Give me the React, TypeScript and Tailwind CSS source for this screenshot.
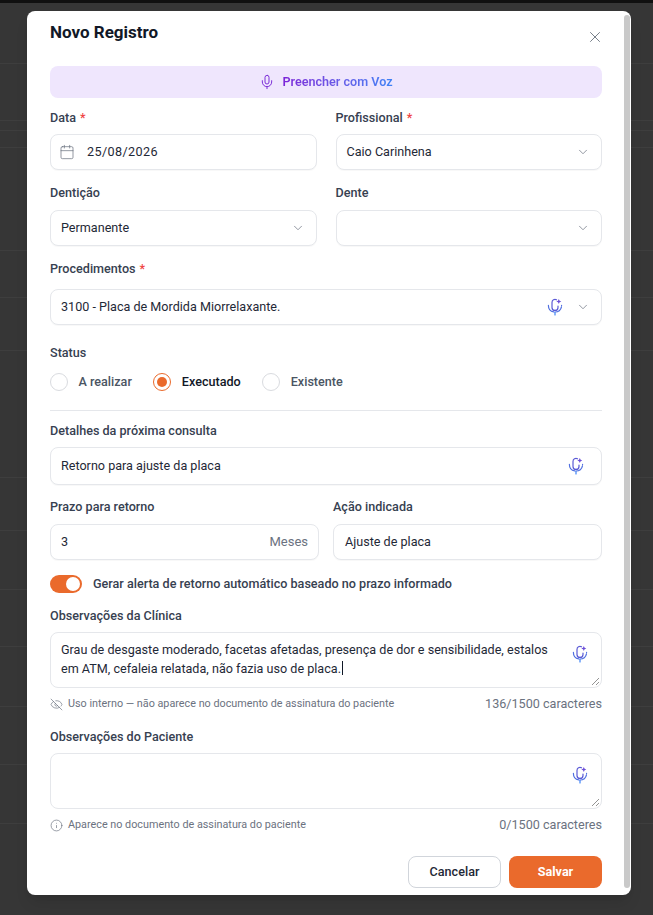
import { Calendar, ChevronDown, EyeOff, Info, Mic, X } from 'lucide-react';
import type { ReactNode } from 'react';

const rowLines = [63, 120, 130, 147, 250, 297, 350, 477, 530, 589, 646, 706, 764, 823];

function Label({ children, required }: { children: ReactNode; required?: boolean }) {
  return (
    <label className="block h-[19px] text-[12.6px] leading-[19px] font-medium text-[#374151]">
      {children}
      {required && <span className="ml-1 text-[#ef4444]">*</span>}
    </label>
  );
}

function AiMic() {
  return (
    <svg width="16" height="18" viewBox="0 0 16 18" fill="none" strokeWidth="1.2" strokeLinecap="round">
      <path d="M9.5 1.8A3 3 0 0 0 5 4.4v5a3 3 0 0 0 6 0V8" stroke="#5b5bd6" />
      <path d="M1.4 7.4a6.6 6.6 0 0 0 13.2 0" stroke="#4f6fe0" strokeDasharray="9 1.2" />
      <path d="M8 14.6V17" stroke="#3b82f6" />
      <path d="M11.8 1l.8 1.7 1.7.8-1.7.8-.8 1.7-.8-1.7-1.7-.8 1.7-.8z" fill="#6d4fd8" />
    </svg>
  );
}

function Field({ children, className }: { children: ReactNode; className: string }) {
  return (
    <div className={`flex h-9 items-center rounded-lg border border-[#e5e7eb] bg-white text-[12.6px] text-[#1f2937] shadow-[0_1px_1px_rgba(0,0,0,0.03)] ${className}`}>
      {children}
    </div>
  );
}

function Select({ value }: { value?: string }) {
  return (
    <Field className="justify-between pr-[11px] pl-[10px]">
      <span>{value}</span>
      <ChevronDown size={14} strokeWidth={1.25} className="text-[#6b7280]" />
    </Field>
  );
}

function Radio({ label, checked }: { label: string; checked?: boolean }) {
  return (
    <div className="flex items-center gap-[10.5px]">
      {checked ? (
        <span className="flex h-[18px] w-[18px] items-center justify-center rounded-full border border-[#ea6a2c]">
          <span className="h-[10px] w-[10px] rounded-full bg-[#ea6a2c]" />
        </span>
      ) : (
        <span className="h-[18px] w-[18px] rounded-full border border-[#d9dbdf]" />
      )}
      <span className={`text-[12.6px] font-medium ${checked ? 'text-[#111827]' : 'text-[#4b5563]'}`}>{label}</span>
    </div>
  );
}

function Notes({ value, caret }: { value?: string; caret?: boolean }) {
  return (
    <div className="relative mt-[7px] h-14 rounded-lg border border-[#e5e7eb] bg-white px-[10px] py-[8px] text-[12.6px] leading-[18px] text-[#1f2937]">
      <p className="w-[495px]">
        {value}
        {caret && <span className="ml-px inline-block h-[14px] w-px translate-y-[2px] bg-[#111827]" />}
      </p>
      <span className="absolute top-[12px] right-[13px]">
        <AiMic />
      </span>
      <svg className="absolute right-[1px] bottom-[1px]" width="9" height="9" viewBox="0 0 9 9" stroke="#777" strokeWidth="0.8">
        <path d="M1 8l7-7M5 8l3-3" />
      </svg>
    </div>
  );
}

export default function App() {
  return (
    <div className="relative h-[915px] w-[653px] overflow-hidden bg-[#363636] font-['Roboto','Inter',sans-serif]">
      <div className="absolute inset-x-0 top-0 h-[3px] bg-[#101010]" />
      {rowLines.map((y) => (
        <div key={y} className="absolute inset-x-0 h-px bg-[#3e3e3e]" style={{ top: y }} />
      ))}

      <div className="absolute top-[11px] left-[27px] flex h-[884px] w-[604px] rounded-lg bg-white shadow-lg">
        <div className="w-[597px] pt-[10px] pl-[23px]">
          <div className="w-[552px]">
            <div className="flex items-start justify-between">
              <h2 className="text-[17px] leading-[22px] font-bold text-[#111827]">Novo Registro</h2>
              <X size={18} strokeWidth={1} className="mt-[7px] -mr-[2px] text-[#4b5563]" />
            </div>

            <button className="mt-[20px] flex h-8 w-full items-center justify-center gap-[7px] rounded-lg bg-[#efe6fd] text-[12.6px] font-semibold">
              <Mic size={16} strokeWidth={1.5} className="text-[#7c2fd8]" />
              <span className="bg-gradient-to-r from-[#7c22d8] to-[#3b82f6] bg-clip-text text-transparent">Preencher com Voz</span>
            </button>

            <div className="mt-[10px] grid grid-cols-2 gap-x-[19px]">
              <div>
                <Label required>Data</Label>
                <Field className="mt-[7px] gap-[12px] pl-[8px]">
                  <Calendar size={16} strokeWidth={1.1} className="text-[#6b7280]" />
                  <span className="tracking-[0.4px]">25/08/2026</span>
                </Field>
              </div>
              <div>
                <Label required>Profissional</Label>
                <div className="mt-[7px]">
                  <Select value="Caio Carinhena" />
                </div>
              </div>
              <div className="mt-[13px]">
                <Label>Dentição</Label>
                <div className="mt-[8px]">
                  <Select value="Permanente" />
                </div>
              </div>
              <div className="mt-[13px]">
                <Label>Dente</Label>
                <div className="mt-[8px]">
                  <Select />
                </div>
              </div>
            </div>

            <div className="mt-[13px]">
              <Label required>Procedimentos</Label>
              <Field className="mt-[11px] justify-between pr-[11px] pl-[10px]">
                <span>3100 - Placa de Mordida Miorrelaxante.</span>
                <span className="flex items-center gap-[13px]">
                  <AiMic />
                  <ChevronDown size={14} strokeWidth={1.25} className="text-[#6b7280]" />
                </span>
              </Field>
            </div>

            <div className="mt-[18px]">
              <Label>Status</Label>
              <div className="mt-[11px] flex h-[18px] items-center gap-[21.5px]">
                <Radio label="A realizar" />
                <Radio label="Executado" checked />
                <Radio label="Existente" />
              </div>
            </div>

            <div className="mt-[19px] h-px bg-[#e5e7eb]" />

            <div className="mt-[10px]">
              <Label>Detalhes da próxima consulta</Label>
              <Field className="mt-[7px] h-[38px] justify-between pr-[17px] pl-[10px]">
                <span>Retorno para ajuste da placa</span>
                <AiMic />
              </Field>
            </div>

            <div className="mt-[12px] flex gap-[14px]">
              <div className="w-[269px]">
                <Label>Prazo para retorno</Label>
                <Field className="mt-[8px] justify-between px-[10px]">
                  <span>3</span>
                  <span className="text-[13px] text-[#6b7280]">Meses</span>
                </Field>
              </div>
              <div className="flex-1">
                <Label>Ação indicada</Label>
                <Field className="mt-[8px] pl-[11px]">Ajuste de placa</Field>
              </div>
            </div>

            <div className="mt-[15px] flex h-[18px] items-center gap-[11px]">
              <span className="flex h-[18px] w-8 items-center justify-end rounded-full bg-[#ea6a2c] pr-[2px]">
                <span className="h-[14px] w-[14px] rounded-full bg-white" />
              </span>
              <span className="text-[12.6px] font-medium text-[#374151]">Gerar alerta de retorno automático baseado no prazo informado</span>
            </div>

            <div className="mt-[13px]">
              <Label>Observações da Clínica</Label>
              <Notes caret value="Grau de desgaste moderado, facetas afetadas, presença de dor e sensibilidade, estalos em ATM, cefaleia relatada, não fazia uso de placa." />
              <div className="mt-[7px] flex h-[18px] items-center justify-between">
                <span className="flex items-center gap-[5px] text-[10.8px] text-[#6b7280]">
                  <EyeOff size={13} strokeWidth={1.25} />
                  Uso interno — não aparece no documento de assinatura do paciente
                </span>
                <span className="text-[12.6px] text-[#6b7280]">136/1500 caracteres</span>
              </div>
            </div>

            <div className="mt-[14px]">
              <Label>Observações do Paciente</Label>
              <Notes />
              <div className="mt-[7px] flex h-[18px] items-center justify-between">
                <span className="flex items-center gap-[5px] text-[10.8px] text-[#6b7280]">
                  <Info size={13} strokeWidth={1.25} />
                  Aparece no documento de assinatura do paciente
                </span>
                <span className="text-[12.6px] text-[#6b7280]">0/1500 caracteres</span>
              </div>
            </div>

            <div className="mt-[22px] flex justify-end gap-2">
              <button className="h-8 w-[93px] rounded-lg border border-[#d1d5db] bg-white text-[12.6px] font-medium text-[#1f2937]">Cancelar</button>
              <button className="h-8 w-[93px] rounded-lg bg-[#ea6a2c] text-[12.6px] font-bold text-white">Salvar</button>
            </div>
          </div>
        </div>
        <div className="mt-[4px] mb-[7px] w-[6px] rounded-full bg-[#c9c9c9]" />
      </div>
    </div>
  );
}
